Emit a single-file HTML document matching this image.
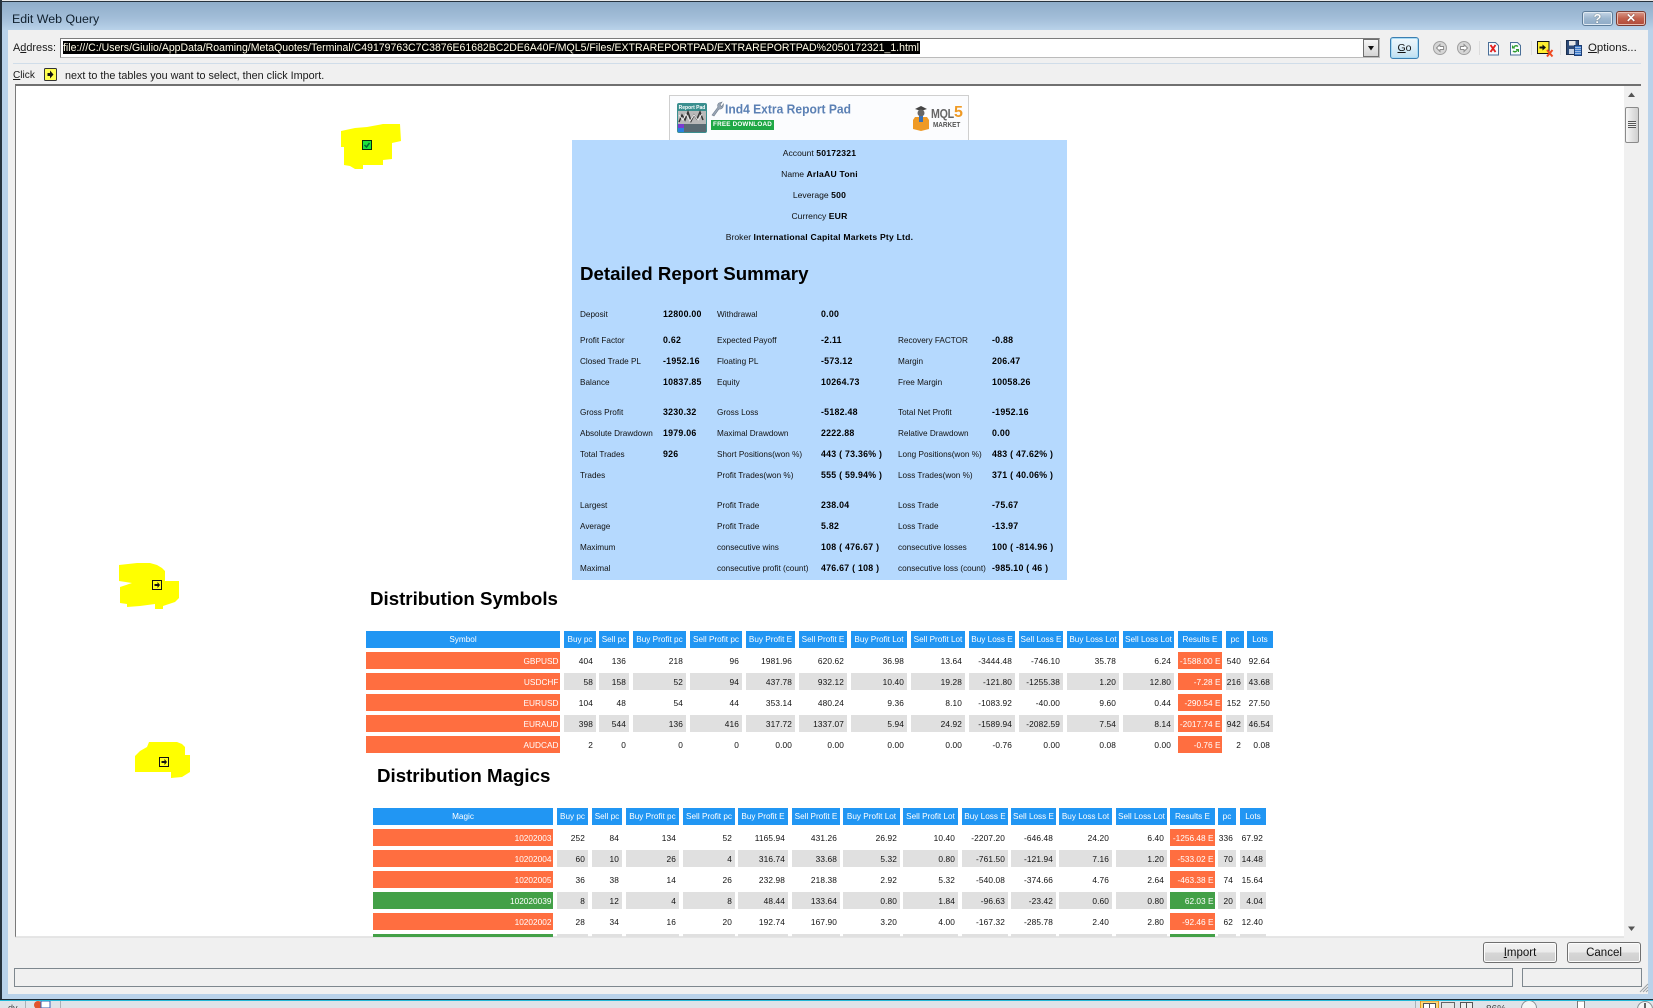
<!DOCTYPE html>
<html><head><meta charset="utf-8"><title>Edit Web Query</title>
<style>
html,body{margin:0;padding:0;width:1653px;height:1008px;overflow:hidden;background:#b9d2ea;font-family:"Liberation Sans",sans-serif;color:#111}
div,span,svg{position:absolute;display:block;box-sizing:border-box;white-space:nowrap}
u{text-decoration:underline}
.ui{font-size:11.3px;line-height:14px;color:#1a1a1a}
/* panel */
.c{left:572px;width:495px;text-align:center;font-size:8.6px;line-height:14px;color:#111}
.c b{color:#000;letter-spacing:.22px}
.r{left:0;top:0;height:14px;width:1px}
.r span{font-size:8.2px;line-height:14px;color:#111;top:1px}
.r span:nth-child(even){font-weight:bold;color:#000;font-size:8.8px;letter-spacing:.25px;top:0}
.r span:nth-child(1){left:580px}.r span:nth-child(2){left:663px}.r span:nth-child(3){left:717px}
.r span:nth-child(4){left:821px}.r span:nth-child(5){left:898px}.r span:nth-child(6){left:992px}
h2{position:absolute;margin:0;font-size:18.7px;line-height:24px;font-weight:bold;color:#000;white-space:nowrap}
/* tables */
.t{left:0;width:1px;height:17px}
.t span{top:0;height:17px;line-height:18px;font-size:8.3px;text-align:right;padding-right:3px;color:#111;letter-spacing:.12px}
.t.g span{background:#e0e0e0}
.t.h span{background:#2196f3;color:#fff;text-align:center;padding:0;font-size:8.2px;letter-spacing:0}
.t span.o{background:#ff6e40;color:#fff;padding-right:1.5px;letter-spacing:0}
.t span.v{background:#43a047;color:#fff;padding-right:1.5px;letter-spacing:0}
.s span:nth-child(1){left:366px;width:194px}.s span:nth-child(2){left:564px;width:32px}.s span:nth-child(3){left:599px;width:30px}
.s span:nth-child(4){left:633px;width:53px}.s span:nth-child(5){left:690px;width:52px}.s span:nth-child(6){left:746px;width:49px}
.s span:nth-child(7){left:799px;width:48px}.s span:nth-child(8){left:851px;width:56px}.s span:nth-child(9){left:911px;width:54px}
.s span:nth-child(10){left:969px;width:46px}.s span:nth-child(11){left:1019px;width:44px}.s span:nth-child(12){left:1067px;width:52px}
.s span:nth-child(13){left:1123px;width:51px}.s span:nth-child(14){left:1178px;width:44px}.s span:nth-child(15){left:1226px;width:18px}
.s span:nth-child(16){left:1247px;width:26px}
.m span:nth-child(1){left:373px;width:180px}.m span:nth-child(2){left:557px;width:31px}.m span:nth-child(3){left:592px;width:30px}
.m span:nth-child(4){left:626px;width:53px}.m span:nth-child(5){left:683px;width:52px}.m span:nth-child(6){left:738px;width:50px}
.m span:nth-child(7){left:792px;width:48px}.m span:nth-child(8){left:843px;width:57px}.m span:nth-child(9){left:903px;width:55px}
.m span:nth-child(10){left:962px;width:46px}.m span:nth-child(11){left:1011px;width:45px}.m span:nth-child(12){left:1059px;width:53px}
.m span:nth-child(13){left:1116px;width:51px}.m span:nth-child(14){left:1170px;width:45px}.m span:nth-child(15){left:1218px;width:18px}
.m span:nth-child(16){left:1240px;width:26px}
.btn{border:1px solid #707070;border-radius:3px;background:linear-gradient(#f2f2f2 0,#ebebeb 48%,#d6d6d6 52%,#cfcfcf 100%);box-shadow:inset 0 0 0 1px #fcfcfc;text-align:center;font-size:12px;color:#111}
</style></head><body>

<!-- window frame -->
<div style="left:0;top:0;width:1653px;height:30px;background:linear-gradient(#8dabc8,#a2bdd8 60%,#b9d2e9)"></div>
<div style="left:0;top:0;width:1653px;height:1px;background:#e8e8e8"></div>
<div style="left:0;top:1px;width:1653px;height:1px;background:#26323d"></div>
<div style="left:0;top:0;width:2px;height:1000px;background:#26323d"></div>
<div style="left:8px;top:30px;width:1640px;height:964px;background:#f0f0f0"></div>
<div class="ui" style="left:12px;top:12px;font-size:12.4px;color:#10202e">Edit Web Query</div>

<div class="btn" style="left:1582px;top:11px;width:31px;height:15px;border-color:#5d7c99;background:linear-gradient(#c5d6e6,#9db7cf 50%,#8eaac6);line-height:13px;color:#fff;font-size:13px;font-weight:bold;box-shadow:inset 0 0 0 1px #dfe9f2;text-shadow:0 0 1px #233">?</div>
<div class="btn" style="left:1616px;top:11px;width:30px;height:15px;border-color:#7a3a30;background:linear-gradient(#d99a8b,#c2604c 50%,#b04a38);line-height:13px;color:#fff;font-size:12px;font-weight:bold;box-shadow:inset 0 0 0 1px #e8bcb0;text-shadow:0 0 1px #300">✕</div>

<!-- address row -->
<div class="ui" style="left:13px;top:41px;font-size:10.9px">A<u>d</u>dress:</div>
<div style="left:60px;top:38px;width:1320px;height:20px;background:#fff;border:1px solid #8c8c8c;border-color:#7b7b7b #bbb #bbb #7b7b7b"></div>
<div style="left:63px;top:41px;width:857px;height:13px;background:#000"></div>
<svg style="left:63px;top:40px" width="860" height="15"><text x="0" y="11" font-family="Liberation Sans" font-size="11" fill="#fffbe6" textLength="856" lengthAdjust="spacingAndGlyphs">file:///C:/Users/Giulio/AppData/Roaming/MetaQuotes/Terminal/C49179763C7C3876E61682BC2DE6A40F/MQL5/Files/EXTRAREPORTPAD/EXTRAREPORTPAD%2050172321_1.html</text></svg>
<div style="left:1363px;top:39px;width:16px;height:18px;background:linear-gradient(#f6f6f6,#d4d4d4);border:1px solid #6f6f6f"></div>
<svg style="left:1366px;top:45px" width="10" height="7"><path d="M2 1H8L5 5.500Z" fill="#111"/></svg>
<div class="btn" style="left:1390px;top:37px;width:29px;height:22px;border:1px solid #3c7fb1;border-radius:3px;background:linear-gradient(#f0f8fc,#dbeef8 50%,#bfdff0);box-shadow:inset 0 0 0 1px #a8dbf5;line-height:20px;font-size:10.500px"><u>G</u>o</div>

<!-- toolbar icons -->
<svg style="left:1430px;top:36px" width="210" height="24" viewBox="1430 36 210 24">
 <g fill="#d6d6d6" stroke="#a0a0a0"><circle cx="1440" cy="48" r="6.500"/><circle cx="1464" cy="48" r="6.500"/></g>
 <g fill="#fff" stroke="#8a8a8a" stroke-width=".9"><path d="M1436.500 48l3.500-3.500v2h3.500v3H1440v2z"/><path d="M1467.500 48l-3.500-3.500v2h-3.500v3h3.500v2z"/></g>
 <g stroke="#dcdcdc"><path d="M1479.500 41v14M1531.500 41v14M1560.500 41v14"/></g>
 <g fill="#f6fafe" stroke="#4a6f98"><path d="M1488.500 42.500h7l3 3v9.500h-10z"/><path d="M1510.500 42.500h7l3 3v9.500h-10z"/></g>
 <path d="M1490.500 45l5 7M1495.500 45l-5 7" stroke="#e02020" stroke-width="1.900"/>
 <path d="M1518 46.500a2.800 2.800 0 0 0-4.500 1M1513 51a2.800 2.800 0 0 0 4.500-1" stroke="#2f9e2f" stroke-width="1.400" fill="none"/>
 <path d="M1512.500 45.500v2.500h2.500M1518.500 52v-2.500h-2.500" stroke="#2f9e2f" fill="none"/>
 <rect x="1537.500" y="41.500" width="11.500" height="12" fill="#ffef30" stroke="#111"/>
 <path d="M1539.500 46.500h3v-2l3.500 3-3.500 3v-2h-3z" fill="#111"/>
 <path d="M1547 50l5.500 6.500M1552.500 50l-5.500 6.500" stroke="#f04a20" stroke-width="2"/>
 <rect x="1566.500" y="40.500" width="12" height="14" fill="#2c4a78" stroke="#1d2f4e"/>
 <rect x="1569" y="41" width="6.500" height="4.500" fill="#e8e8e8"/>
 <rect x="1569" y="49" width="6" height="5" fill="#c7d3e4"/>
 <rect x="1574.500" y="45.500" width="7" height="10" fill="#3b79c9" stroke="#1d3e74"/>
 <path d="M1575.500 47.500h5M1575.500 49.500h5M1575.500 51.500h5M1575.500 53.500h5" stroke="#fff" stroke-dasharray="1 1"/>
</svg>
<div class="ui" style="left:1588px;top:41px;font-size:11.400px"><u>O</u>ptions...</div>
<div style="left:13px;top:63px;width:1628px;height:1px;background:#d0dde9"></div>

<!-- hint row -->
<div class="ui" style="left:13px;top:69px;font-size:10.100px"><u>C</u>lick</div>
<svg style="left:44px;top:68px" width="14" height="14"><rect x=".5" y=".5" width="12" height="12" rx="1" fill="#ffff50" stroke="#333"/><path d="M3.500 5h2.500V2.500L9.500 6.500L6 10.500V8H3.500z" fill="#111"/></svg>
<div class="ui" style="left:65px;top:69px;font-size:10.800px">next to the tables you want to select, then click Import.</div>

<!-- web view -->
<div style="left:15px;top:84px;width:1626px;height:854px;background:#fff;border-top:2px solid #707070;border-left:1px solid #7a7a7a;border-bottom:2px solid #e6e6e6;overflow:hidden"></div>

<!-- scrollbar -->
<div style="left:1624px;top:86px;width:17px;height:851px;background:#f0f0f0"></div>
<svg style="left:1627px;top:91px" width="10" height="8"><path d="M1 6h7L4.500 1.500z" fill="#555"/></svg>
<svg style="left:1627px;top:925px" width="10" height="8"><path d="M1 1.500h7L4.500 6z" fill="#555"/></svg>
<div style="left:1625px;top:107px;width:14px;height:36px;border:1px solid #8a8a8a;border-radius:2px;background:linear-gradient(90deg,#f6f6f6,#e0e0e0 55%,#cfcfcf)"></div>
<div style="left:1628px;top:121px;width:8px;height:7px;background:repeating-linear-gradient(#555 0,#555 1px,#eee 1px,#eee 2px)"></div>

<!-- highlighted markers -->
<svg style="left:0;top:0" width="500" height="800" viewBox="0 0 500 800">
 <path fill="#ffff00" d="M341 131L355 128L367 127L383 124L400 124L401 141L392 143L392 159L383 160L383 165L363 165L363 169L355 169L350 166L344 165L344 147L341 147Z"/>
 <path fill="#ffff00" d="M119 565L137 563L150 563L157 565L162 568L165 571L165 581L179 581L179 598L175 602L163 606L163 609L155 609L155 604L140 606L127 607L127 604L120 603L120 587L132 583L119 581Z"/>
 <path fill="#ffff00" d="M149 742L177 742L182 744L185 747L185 755L190 755L190 772L182 777L171 778L171 772L135 772L135 756L140 751L147 747Z"/>
 <rect x="362.500" y="140.500" width="9" height="9" fill="#1fe23c" stroke="#0a2a0a"/>
 <path d="M364.500 145l2 2 3-4" fill="none" stroke="#063" stroke-width="1.500"/>
 <rect x="152.500" y="580.500" width="9" height="9" fill="#ffff20" stroke="#111"/>
 <path d="M154.500 584h3v-2l2.500 3-2.500 3v-2h-3z" fill="#111"/>
 <rect x="159.500" y="757.500" width="9" height="9" fill="#ffff20" stroke="#111"/>
 <path d="M161.500 761h3v-2l2.500 3-2.500 3v-2h-3z" fill="#111"/>
</svg>

<!-- banner -->
<div style="left:669px;top:95px;width:300px;height:46px;background:#fbfcfe;border:1px solid #cfcfcf"></div>
<svg style="left:676px;top:102px" width="32" height="32">
 <rect x="1" y="1" width="30" height="30" rx="2" fill="#3a8f8f"/>
 <rect x="2" y="9" width="28" height="13" fill="#b9b9b9"/>
 <path d="M3 20l3-7 3 5 3-8 3 9 3-6 3 4 3-7 3 8" stroke="#333" fill="none" stroke-width="1.500"/>
 <path d="M3 13l4 5 3-6 4 7 4-6 4 5 4-6" stroke="#eee" fill="none"/>
 <rect x="2" y="22" width="28" height="8" fill="#5a6a72"/>
 <rect x="2" y="22" width="6" height="4" fill="#7a3bd0"/><rect x="2" y="26" width="6" height="4" fill="#2a80e0"/>
 <text x="16" y="7" font-size="5" font-weight="bold" fill="#fff" text-anchor="middle" font-family="Liberation Sans">Report Pad</text>
</svg>
<svg style="left:710px;top:101px" width="14" height="16"><path d="M2 14L8 6a3 3 0 0 1 1-4l3-1-2 3 1.500 1.500 2-2.500-.5 3a3.500 3.500 0 0 1-4 2L4 15z" fill="#9aa6b5" stroke="#6c7a8a" stroke-width=".6"/></svg>
<svg style="left:725px;top:101px" width="130" height="16"><text x="0" y="12.500" font-family="Liberation Sans" font-weight="bold" font-size="12.500" fill="#5b80b4" textLength="126" lengthAdjust="spacingAndGlyphs">Ind4 Extra Report Pad</text></svg>
<div style="left:711px;top:120px;width:63px;height:10px;background:#1fa845;color:#fff;font-size:6.300px;font-weight:bold;line-height:10px;text-align:center;letter-spacing:.2px">FREE DOWNLOAD</div>
<svg style="left:912px;top:105px" width="20" height="26"><path d="M3 4l6-3 6 3-6 2z" fill="#444"/><circle cx="9" cy="8" r="3.500" fill="#666"/><path d="M3 12h12l2 3v9l-8 2-8-2v-9z" fill="#ef9a25"/><path d="M7 11h4v6H7z" fill="#3a70b5"/></svg>
<div style="left:931px;top:106px;font-size:13px;line-height:15px;font-weight:bold;color:#666;letter-spacing:-.3px;transform-origin:left;transform:scaleX(.82)">MQL</div>
<div style="left:954px;top:105px;font-size:16px;line-height:16px;font-weight:bold;color:#ef9a25">5</div>
<div style="left:933px;top:120px;font-size:7.500px;line-height:9px;font-weight:bold;color:#555;transform-origin:left;transform:scaleX(.85)">MARKET</div>

<!-- summary panel -->
<div style="left:572px;top:140px;width:495px;height:440px;background:#b5d9fe"></div>
<div class="c" style="top:146px">Account <b>50172321</b></div>
<div class="c" style="top:167px">Name <b>ArlaAU Toni</b></div>
<div class="c" style="top:188px">Leverage <b>500</b></div>
<div class="c" style="top:209px">Currency <b>EUR</b></div>
<div class="c" style="top:230px">Broker <b>International Capital Markets Pty Ltd.</b></div>
<h2 style="left:580px;top:262px">Detailed Report Summary</h2>

<div class="r" style="top:307px"><span>Deposit</span><span>12800.00</span><span>Withdrawal</span><span>0.00</span></div>
<div class="r" style="top:333px"><span>Profit Factor</span><span>0.62</span><span>Expected Payoff</span><span>-2.11</span><span>Recovery FACTOR</span><span>-0.88</span></div>
<div class="r" style="top:354px"><span>Closed Trade PL</span><span>-1952.16</span><span>Floating PL</span><span>-573.12</span><span>Margin</span><span>206.47</span></div>
<div class="r" style="top:375px"><span>Balance</span><span>10837.85</span><span>Equity</span><span>10264.73</span><span>Free Margin</span><span>10058.26</span></div>
<div class="r" style="top:405px"><span>Gross Profit</span><span>3230.32</span><span>Gross Loss</span><span>-5182.48</span><span>Total Net Profit</span><span>-1952.16</span></div>
<div class="r" style="top:426px"><span>Absolute Drawdown</span><span>1979.06</span><span>Maximal Drawdown</span><span>2222.88</span><span>Relative Drawdown</span><span>0.00</span></div>
<div class="r" style="top:447px"><span>Total Trades</span><span>926</span><span>Short Positions(won %)</span><span>443 ( 73.36% )</span><span>Long Positions(won %)</span><span>483 ( 47.62% )</span></div>
<div class="r" style="top:468px"><span>Trades</span><span></span><span>Profit Trades(won %)</span><span>555 ( 59.94% )</span><span>Loss Trades(won %)</span><span>371 ( 40.06% )</span></div>
<div class="r" style="top:498px"><span>Largest</span><span></span><span>Profit Trade</span><span>238.04</span><span>Loss Trade</span><span>-75.67</span></div>
<div class="r" style="top:519px"><span>Average</span><span></span><span>Profit Trade</span><span>5.82</span><span>Loss Trade</span><span>-13.97</span></div>
<div class="r" style="top:540px"><span>Maximum</span><span></span><span>consecutive wins</span><span>108 ( 476.67 )</span><span>consecutive losses</span><span>100 ( -814.96 )</span></div>
<div class="r" style="top:561px"><span>Maximal</span><span></span><span>consecutive profit (count)</span><span>476.67 ( 108 )</span><span>consecutive loss (count)</span><span>-985.10 ( 46 )</span></div>

<!-- symbols -->
<h2 style="left:370px;top:587px">Distribution Symbols</h2>
<div class="t s h" style="top:631px"><span>Symbol</span><span>Buy pc</span><span>Sell pc</span><span>Buy Profit pc</span><span>Sell Profit pc</span><span>Buy Profit E</span><span>Sell Profit E</span><span>Buy Profit Lot</span><span>Sell Profit Lot</span><span>Buy Loss E</span><span>Sell Loss E</span><span>Buy Loss Lot</span><span>Sell Loss Lot</span><span>Results E</span><span>pc</span><span>Lots</span></div>
<div class="t s" style="top:652px"><span class="o">GBPUSD</span><span>404</span><span>136</span><span>218</span><span>96</span><span>1981.96</span><span>620.62</span><span>36.98</span><span>13.64</span><span>-3444.48</span><span>-746.10</span><span>35.78</span><span>6.24</span><span class="o">-1588.00 E</span><span>540</span><span>92.64</span></div>
<div class="t s g" style="top:673px"><span class="o">USDCHF</span><span>58</span><span>158</span><span>52</span><span>94</span><span>437.78</span><span>932.12</span><span>10.40</span><span>19.28</span><span>-121.80</span><span>-1255.38</span><span>1.20</span><span>12.80</span><span class="o">-7.28 E</span><span>216</span><span>43.68</span></div>
<div class="t s" style="top:694px"><span class="o">EURUSD</span><span>104</span><span>48</span><span>54</span><span>44</span><span>353.14</span><span>480.24</span><span>9.36</span><span>8.10</span><span>-1083.92</span><span>-40.00</span><span>9.60</span><span>0.44</span><span class="o">-290.54 E</span><span>152</span><span>27.50</span></div>
<div class="t s g" style="top:715px"><span class="o">EURAUD</span><span>398</span><span>544</span><span>136</span><span>416</span><span>317.72</span><span>1337.07</span><span>5.94</span><span>24.92</span><span>-1589.94</span><span>-2082.59</span><span>7.54</span><span>8.14</span><span class="o">-2017.74 E</span><span>942</span><span>46.54</span></div>
<div class="t s" style="top:736px"><span class="o">AUDCAD</span><span>2</span><span>0</span><span>0</span><span>0</span><span>0.00</span><span>0.00</span><span>0.00</span><span>0.00</span><span>-0.76</span><span>0.00</span><span>0.08</span><span>0.00</span><span class="o">-0.76 E</span><span>2</span><span>0.08</span></div>

<!-- magics -->
<h2 style="left:377px;top:764px">Distribution Magics</h2>
<div class="t m h" style="top:808px"><span>Magic</span><span>Buy pc</span><span>Sell pc</span><span>Buy Profit pc</span><span>Sell Profit pc</span><span>Buy Profit E</span><span>Sell Profit E</span><span>Buy Profit Lot</span><span>Sell Profit Lot</span><span>Buy Loss E</span><span>Sell Loss E</span><span>Buy Loss Lot</span><span>Sell Loss Lot</span><span>Results E</span><span>pc</span><span>Lots</span></div>
<div class="t m" style="top:829px"><span class="o">10202003</span><span>252</span><span>84</span><span>134</span><span>52</span><span>1165.94</span><span>431.26</span><span>26.92</span><span>10.40</span><span>-2207.20</span><span>-646.48</span><span>24.20</span><span>6.40</span><span class="o">-1256.48 E</span><span>336</span><span>67.92</span></div>
<div class="t m g" style="top:850px"><span class="o">10202004</span><span>60</span><span>10</span><span>26</span><span>4</span><span>316.74</span><span>33.68</span><span>5.32</span><span>0.80</span><span>-761.50</span><span>-121.94</span><span>7.16</span><span>1.20</span><span class="o">-533.02 E</span><span>70</span><span>14.48</span></div>
<div class="t m" style="top:871px"><span class="o">10202005</span><span>36</span><span>38</span><span>14</span><span>26</span><span>232.98</span><span>218.38</span><span>2.92</span><span>5.32</span><span>-540.08</span><span>-374.66</span><span>4.76</span><span>2.64</span><span class="o">-463.38 E</span><span>74</span><span>15.64</span></div>
<div class="t m g" style="top:892px"><span class="v">102020039</span><span>8</span><span>12</span><span>4</span><span>8</span><span>48.44</span><span>133.64</span><span>0.80</span><span>1.84</span><span>-96.63</span><span>-23.42</span><span>0.60</span><span>0.80</span><span class="v">62.03 E</span><span>20</span><span>4.04</span></div>
<div class="t m" style="top:913px"><span class="o">10202002</span><span>28</span><span>34</span><span>16</span><span>20</span><span>192.74</span><span>167.90</span><span>3.20</span><span>4.00</span><span>-167.32</span><span>-285.78</span><span>2.40</span><span>2.80</span><span class="o">-92.46 E</span><span>62</span><span>12.40</span></div>
<div class="t m g" style="top:934px"><span class="v"></span><span></span><span></span><span></span><span></span><span></span><span></span><span></span><span></span><span></span><span></span><span></span><span></span><span class="v"></span><span></span><span></span></div>

<!-- bottom of dialog -->
<div style="left:8px;top:937px;width:1640px;height:57px;background:#f0f0f0"></div>
<div style="left:15px;top:937px;width:1609px;height:1px;background:#e4e4e4"></div>
<div class="btn" style="left:1483px;top:942px;width:74px;height:21px;line-height:20px;font-size:11.500px"><u>I</u>mport</div>
<div class="btn" style="left:1567px;top:942px;width:74px;height:21px;line-height:20px;font-size:11.500px">Cancel</div>
<div style="left:14px;top:968px;width:1499px;height:19px;border:1px solid #7e878e"></div>
<div style="left:1522px;top:968px;width:120px;height:19px;border:1px solid #7e878e"></div>
<svg style="left:1639px;top:983px" width="10" height="10"><path d="M9 1L1 9M9 4L4 9M9 7L7 9" stroke="#9aa0a6"/></svg>

<!-- excel status strip -->
<div style="left:0;top:999px;width:1653px;height:1px;background:#1c2730"></div>
<div style="left:0;top:1000px;width:1653px;height:1px;background:#23b7d6"></div>
<div style="left:0;top:1001px;width:1653px;height:7px;background:#dfe3e8;overflow:hidden">
 <div style="left:8px;top:2px;font-size:9px;line-height:11px;color:#444">dy</div>
 <div style="left:1486px;top:3px;font-size:10px;line-height:11px;color:#444">86%</div>
 <svg style="left:0;top:0" width="1653" height="7">
  <path d="M25.500 0v7M60.500 0v7M1415.500 0v7" stroke="#aab0b6"/>
  <circle cx="38" cy="4" r="4" fill="#e2542e"/><rect x="41" y="0" width="9" height="7" fill="#fff" stroke="#3a62b5"/>
  <rect x="1420.500" y="0" width="18" height="8" fill="#ffd97a" stroke="#e29a20"/>
  <path d="M1423.500 2.500h12v6h-12zM1429.500 2v6" fill="#fff" stroke="#555"/>
  <rect x="1441.500" y="1.500" width="13" height="8" fill="#e6e6e6" stroke="#666"/>
  <path d="M1460.500 1.500h12v7h-12zM1466.500 1v7" fill="#eee" stroke="#555"/>
  <circle cx="1529" cy="7" r="7.500" fill="#f4f4f4" stroke="#8a8f95"/>
  <rect x="1577.500" y="0" width="7" height="8" fill="#fff" stroke="#777"/>
  <circle cx="1645" cy="8" r="7.500" fill="#f4f4f4" stroke="#8a8f95"/>
  <path d="M1645 2v6" stroke="#333" stroke-width="1.500"/>
 </svg>
</div>
</body></html>
